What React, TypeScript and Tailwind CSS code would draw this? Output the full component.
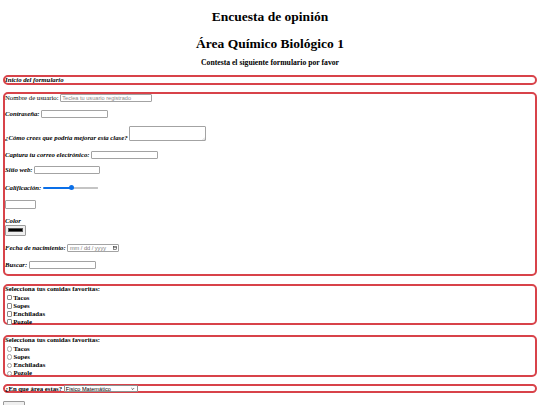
import React from 'react'

const label = "text-[6.75px] leading-[8px] font-bold italic whitespace-nowrap"
const field = "box-border border border-[#a3a3a3] rounded-[1px] bg-white px-[1px] text-[5.6px] font-['Liberation_Sans',Arial,sans-serif] outline-none"
const frame = "box-border mx-[3px] border-2 border-[#d8434a] rounded-[5px]"

const foods = ['Tacos', 'Sopes', 'Enchiladas', 'Pozole']

const Row: React.FC<{ className?: string; children: React.ReactNode }> = ({ className = '', children }) => (
  <div className={`flex items-center gap-[1.7px] ${className}`}>{children}</div>
)

export default function App() {
  return (
    <div className="w-[540px] h-[405px] overflow-hidden bg-white text-black font-['Liberation_Serif','Times_New_Roman',serif]">
      <h1 className="pt-[8.5px] text-center text-[13.5px] leading-[16px] font-bold">Encuesta de opinión</h1>
      <h1 className="mt-[11px] text-center text-[13.5px] leading-[16px] font-bold">Área Químico Biológico 1</h1>
      <h3 className="mt-[7.5px] text-center text-[7.7px] leading-[8px] font-bold">
        Contesta el siguiente formulario por favor
      </h3>

      {/* Inicio */}
      <div className={`${frame} mt-[8px] h-[9.5px] flex items-center`}>
        <span className={label}>Inicio del formulario</span>
      </div>

      {/* Datos */}
      <form className={`${frame} mt-[7.5px] h-[183.5px]`}>
        <Row className="h-[8px]">
          <span className="text-[6.75px] leading-[8px] whitespace-nowrap">Nombre de usuario:</span>
          <input
            className={`${field} w-[91.5px] h-[8.3px] placeholder:text-[#8a8a8a]`}
            placeholder="Teclea tu usuario registrado"
          />
        </Row>
        <Row className="mt-[7.5px] h-[8px]">
          <span className={label}>Contraseña:</span>
          <input type="password" className={`${field} w-[66.5px] h-[8px]`} />
        </Row>
        <div className="mt-[8px] flex items-end gap-[1.7px] h-[15.2px]">
          <span className={`${label} -mb-[1px]`}>¿Cómo crees que podría mejorar esta clase?</span>
          <div className="relative">
            <textarea className={`${field} block w-[76.5px] h-[15px] resize-none`} />
            <svg viewBox="0 0 6 6" className="absolute right-[1px] bottom-[1px] w-[3px] h-[3px]" stroke="#9a9a9a" strokeWidth={0.8}>
              <path d="M6 1 1 6M6 4 4 6" />
            </svg>
          </div>
        </div>
        <Row className="mt-[10.6px] h-[8px]">
          <span className={label}>Captura tu correo electrónico:</span>
          <input type="email" className={`${field} w-[66.5px] h-[8px]`} />
        </Row>
        <Row className="mt-[7px] h-[7.5px]">
          <span className={label}>Sitio web:</span>
          <input type="url" className={`${field} w-[66px] h-[7.5px]`} />
        </Row>
        <Row className="mt-[10px] h-[8px]">
          <span className={label}>Calificación:</span>
          {/* range slider */}
          <div className="flex items-center w-[54.5px] h-[8px]">
            <div className="w-[27px] h-[2.5px] rounded-l-full bg-[#0a6fe8]" />
            <div className="w-[5px] h-[5px] rounded-full bg-[#0a6fe8] -mx-[1px] z-10" />
            <div className="flex-1 h-[2.5px] rounded-r-full bg-[#efefef] border border-[#c4c4c4] border-l-0" />
          </div>
        </Row>
        <input className={`${field} block mt-[8.4px] w-[30.5px] h-[8.6px]`} />
        <div className={`${label} mt-[8.5px] leading-[7px] h-[7px]`}>Color</div>
        <div className="mt-[0.5px] w-[21px] h-[11px] box-border border border-[#9b9b9b] rounded-[1px] bg-[#efefef] px-[2px] py-[2.5px]">
          <div className="w-full h-full bg-black border border-[#555]" />
        </div>
        <Row className="mt-[8.3px] h-[8.3px]">
          <span className={label}>Fecha de nacimiento:</span>
          <div className={`${field} flex items-center justify-between w-[51.7px] h-[8.3px] text-[#7a7a7a] text-[4.6px]`}>
            <span className="pl-[0.5px] whitespace-pre">mm / dd / yyyy</span>
            <svg viewBox="0 0 10 10" className="w-[4px] h-[4px] mr-[0.5px]" fill="none" stroke="#222" strokeWidth={1.3}>
              <rect x="1" y="1.8" width="8" height="7.4" />
              <path d="M1 4h8" />
            </svg>
          </div>
        </Row>
        <Row className="mt-[8.2px] h-[8.3px]">
          <span className={label}>Buscar:</span>
          <input type="search" className={`${field} w-[66.7px] h-[8.3px]`} />
        </Row>
      </form>

      {/* Checkboxes */}
      <div className={`${frame} mt-[8.5px] h-[41px]`}>
        <div className="-mt-[1.25px] text-[6.75px] leading-[8.1px] font-bold whitespace-nowrap">
          Selecciona tus comidas favoritas:
        </div>
        <div className="mt-[0.8px]">
          {foods.map((f) => (
            <label key={f} className="flex items-center h-[8.1px] text-[6.75px] font-bold">
              <span className="ml-[1.5px] mr-[1.2px] w-[5.5px] h-[5.5px] box-border border border-[#8a8a8a] rounded-[1px] bg-white" />
              {f}
            </label>
          ))}
        </div>
      </div>

      {/* Radios */}
      <div className={`${frame} mt-[9.7px] h-[42px]`}>
        <div className="-mt-[0.75px] text-[6.75px] leading-[8.1px] font-bold whitespace-nowrap">
          Selecciona tus comidas favoritas:
        </div>
        <div className="mt-[1px]">
          {foods.map((f) => (
            <label key={f} className="flex items-center h-[8.1px] text-[6.75px] font-bold">
              <span className="ml-[1.7px] mr-[1.2px] w-[5.5px] h-[5.5px] box-border border border-[#a5a5a5] rounded-full bg-white" />
              {f}
            </label>
          ))}
        </div>
      </div>

      {/* Select */}
      <div className={`${frame} mt-[7.3px] h-[9.5px] flex items-center gap-[1.7px]`}>
        <span className="text-[6.75px] leading-[8px] font-bold whitespace-nowrap">¿En que área estas?</span>
        <div className="flex items-center justify-between w-[74px] h-[7.5px] box-border border border-[#8f8f8f] rounded-[1px] bg-white px-[1px] text-[5.6px] font-['Liberation_Sans',Arial,sans-serif]">
          <span>Fisico Matemático</span>
          <svg viewBox="0 0 10 10" className="w-[3.5px] h-[3.5px] mr-[1px]" fill="none" stroke="#111" strokeWidth={2}>
            <path d="M1.5 3.5 5 7l3.5-3.5" />
          </svg>
        </div>
      </div>

      <button className="block ml-[3px] mt-[8px] w-[22px] h-[10px] box-border border border-[#9a9a9a] rounded-[1px] bg-[#efefef]" />
    </div>
  )
}
